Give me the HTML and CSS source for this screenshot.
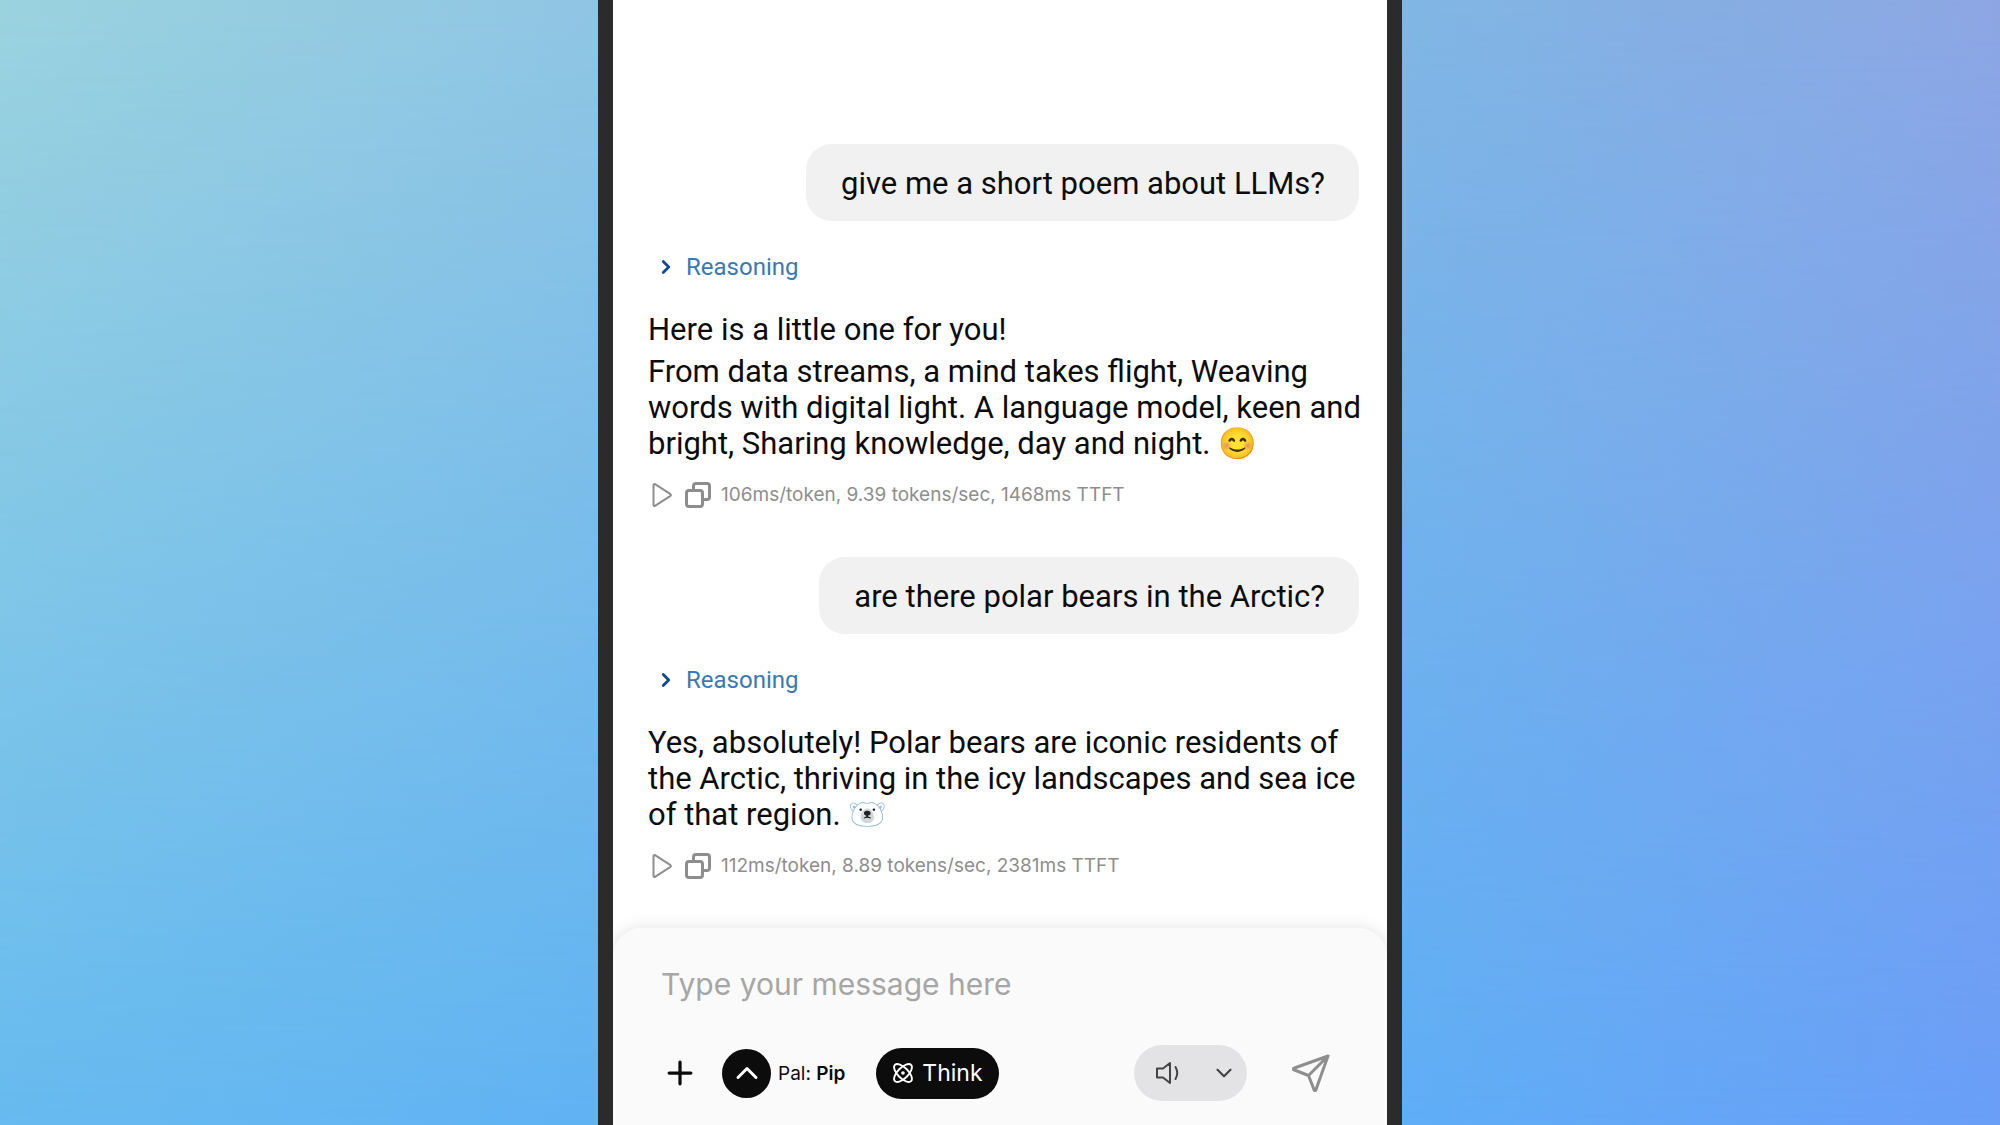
FILE: index.html
```
<!doctype html>
<html lang="en">
<head>
	<meta charset="utf-8">
	<meta name="viewport" content="width=device-width, initial-scale=1">
	<title>Chat</title>
	<link rel="stylesheet" href="styles.css">
</head>
<body>
	<!-- shared icons -->
	<svg class="sprite" aria-hidden="true">
		<symbol id="chevron" viewBox="0 0 24 24"><path d="M9 6l6 6-6 6"/></symbol>
		<symbol id="play" viewBox="0 0 26 26"><path d="M5 3v20a1 1 0 0 0 1.500.8l15.500-10a1 1 0 0 0 0-1.600L6.500 2.200a1 1 0 0 0-1.500.8z"/></symbol>
		<symbol id="copy" viewBox="0 0 26 26"><rect x="1.500" y="8.500" width="16" height="16" rx="2.500"/><path d="M8.500 8V4A2.500 2.500 0 0 1 11 1.500h11A2.500 2.500 0 0 1 24.500 4v11a2.500 2.500 0 0 1-2.500 2.500h-4"/></symbol>
	</svg>
	<div class="phone">
		<main class="chat">
			<p class="question">give me a short poem about LLMs?</p>
			<div class="answer">
				<button type="button" class="reasoning"><svg><use href="#chevron"/></svg>Reasoning</button>
				<p>Here is a little one for you!</p>
				<p>From data streams, a mind takes flight, Weaving words with digital light. A language model, keen and bright, Sharing knowledge, day and night. 😊</p>
				<div class="stats">
					<button type="button" class="play" aria-label="Play"><svg><use href="#play"/></svg></button>
					<button type="button" aria-label="Copy"><svg><use href="#copy"/></svg></button>
					<span>106ms/token, 9.39 tokens/sec, 1468ms TTFT</span>
				</div>
			</div>
			<p class="question">are there polar bears in the Arctic?</p>
			<div class="answer">
				<button type="button" class="reasoning"><svg><use href="#chevron"/></svg>Reasoning</button>
				<p>Yes, absolutely! Polar bears are iconic residents of the Arctic, thriving in the icy landscapes and sea ice of that region. 🐻‍❄️</p>
				<div class="stats">
					<button type="button" class="play" aria-label="Play"><svg><use href="#play"/></svg></button>
					<button type="button" aria-label="Copy"><svg><use href="#copy"/></svg></button>
					<span>112ms/token, 8.89 tokens/sec, 2381ms TTFT</span>
				</div>
			</div>
		</main>
		<form class="composer">
			<input type="text" class="message" placeholder="Type your message here" aria-label="Message">
			<div class="tools">
				<button type="button" class="add" aria-label="Add"><svg viewBox="0 0 24 24"><path d="M12 2v20M2 12h20"/></svg></button>
				<button type="button" class="pal">
					<span class="pal-icon"><svg viewBox="0 0 24 24"><path d="M3 16.500l9-9 9 9"/></svg></span>
					<span>Pal: <b>Pip</b></span>
				</button>
				<button type="button" class="think">
					<svg viewBox="0 0 24 24"><ellipse cx="12" cy="12" rx="5.800" ry="12.500" transform="rotate(45 12 12)"/><ellipse cx="12" cy="12" rx="5.800" ry="12.500" transform="rotate(-45 12 12)"/><circle class="dot" cx="12" cy="12" r="2"/></svg>
					Think
				</button>
				<div class="voice">
					<button type="button" aria-label="Speech"><svg viewBox="0 0 24 24"><path d="M15 2v20l-7-5.500H2v-9h6zM20.500 6q3.500 6 0 12"/></svg></button>
					<button type="button" aria-label="Voices"><svg class="down"><use href="#chevron"/></svg></button>
				</div>
				<button type="submit" class="send" aria-label="Send"><svg viewBox="0 0 38 38"><path d="M36 2L2.500 14a1 1 0 0 0 0 2l14 5.500 5.500 14a1 1 0 0 0 2 0zM36 2L16.500 21.500"/></svg></button>
			</div>
		</form>
	</div>
</body>
</html>
```
FILE: styles.css
```
*{
	box-sizing: border-box;
}
body{
	position: relative;
	margin: 0;
	min-height: 100vh;
	display: flex;
	justify-content: center;
	font-family: Roboto, "Noto Color Emoji", sans-serif;
	color: #0c0c0c;
	background: linear-gradient(90deg, #67bbf0, #60b3f3 30%, #5faef6 70%, #6a9ff8);
}
/* lighter wash that fades out towards the bottom */
body::before{
	content: "";
	position: absolute;
	inset: 0;
	background: linear-gradient(90deg, #9bd2de, #90c5e3 30%, #81b6e4 70%, #8da6e3);
	-webkit-mask-image: linear-gradient(#000, transparent);
	mask-image: linear-gradient(#000, transparent);
}
button{
	display: flex;
	align-items: center;
	padding: 0;
	border: none;
	background: none;
	color: inherit;
	font: inherit;
	cursor: pointer;
}
svg{
	display: block;
	fill: none;
	stroke: currentColor;
	stroke-width: 2;
	stroke-linecap: round;
	stroke-linejoin: round;
}
p{
	margin: 0;
}
.sprite{
	display: none;
}
.phone{
	position: relative;
	display: flex;
	flex-direction: column;
	width: 100%;
	max-width: 804px;
	border: solid #2b2b2b;
	border-width: 0 15px;
	background: #fff;
}
.chat{
	flex: 1;
	display: flex;
	flex-direction: column;
	justify-content: flex-end;
	padding: 40px 28px 44px 35px;
	font-size: 31px;
	line-height: 36px;
}
.question{
	align-self: flex-end;
	padding: 22px 34px 19px 35px;
	border-radius: 26px;
	background: #f1f1f1;
}
.answer{
	margin-bottom: 44px;
}
.answer:last-child{
	margin-bottom: 0;
}
.answer>p{
	margin-top: 6px;
	margin-right: -6px;
}
.reasoning{
	gap: 9px;
	margin: 28px 0 27px 7px;
	font-size: 24px;
	color: #3b79b3;
}
.reasoning svg{
	width: 22px;
	height: 22px;
	color: #13498f;
	stroke-width: 3;
}
.stats{
	display: flex;
	align-items: center;
	gap: 10px;
	height: 36px;
	margin-top: 15px;
	font-family: Inter, sans-serif;
	font-size: 19px;
	color: #8e8e8e;
}
.stats svg{
	width: 26px;
	height: 26px;
	stroke-width: 3;
}
.stats .play svg{
	width: 27px;
	stroke-width: 2;
}
.composer{
	padding: 32px 57px 24px 48px;
	border-radius: 28px 28px 0 0;
	background: #fafafa;
	box-shadow: 0 0 16px rgba(0, 0, 0, 0.12);
	clip-path: inset(-20px 0 0 0);
	font-family: Inter, sans-serif;
}
.message{
	display: block;
	width: 100%;
	height: 48px;
	padding: 0;
	border: none;
	outline: none;
	background: none;
	font: inherit;
	font-size: 30px;
}
.message::placeholder{
	color: #a6a6a6;
	opacity: 1;
}
.tools{
	display: flex;
	align-items: center;
	margin-top: 37px;
}
.add{
	margin: 0 29px 0 6px;
}
.add svg{
	width: 26px;
	height: 26px;
	stroke-width: 3;
}
.pal{
	gap: 7px;
	font-size: 19px;
}
.pal b{
	font-weight: 600;
}
.pal-icon{
	display: grid;
	place-items: center;
	width: 49px;
	height: 49px;
	border-radius: 50%;
	background: #0c0c0c;
	color: #fff;
}
.pal-icon svg{
	width: 24px;
	height: 24px;
	stroke-width: 3;
}
.think{
	gap: 8px;
	height: 51px;
	margin-left: 31px;
	padding: 0 16px;
	border-radius: 26px;
	background: #0c0c0c;
	color: #fff;
	font-size: 23px;
}
.think svg{
	width: 22px;
	height: 22px;
	overflow: visible;
}
.dot{
	fill: currentColor;
	stroke: none;
}
.voice{
	display: flex;
	justify-content: space-between;
	height: 56px;
	margin-left: auto;
	width: 113px;
	padding: 0 10px 0 21px;
	border-radius: 28px;
	background: #e3e3e5;
	color: #444;
}
.voice svg{
	width: 24px;
	height: 24px;
}
.voice .down{
	width: 26px;
	height: 26px;
	transform: rotate(90deg);
}
.send{
	margin-left: 45px;
	color: #8e8e8e;
}
.send svg{
	width: 38px;
	height: 38px;
	stroke-width: 3;
}
```
